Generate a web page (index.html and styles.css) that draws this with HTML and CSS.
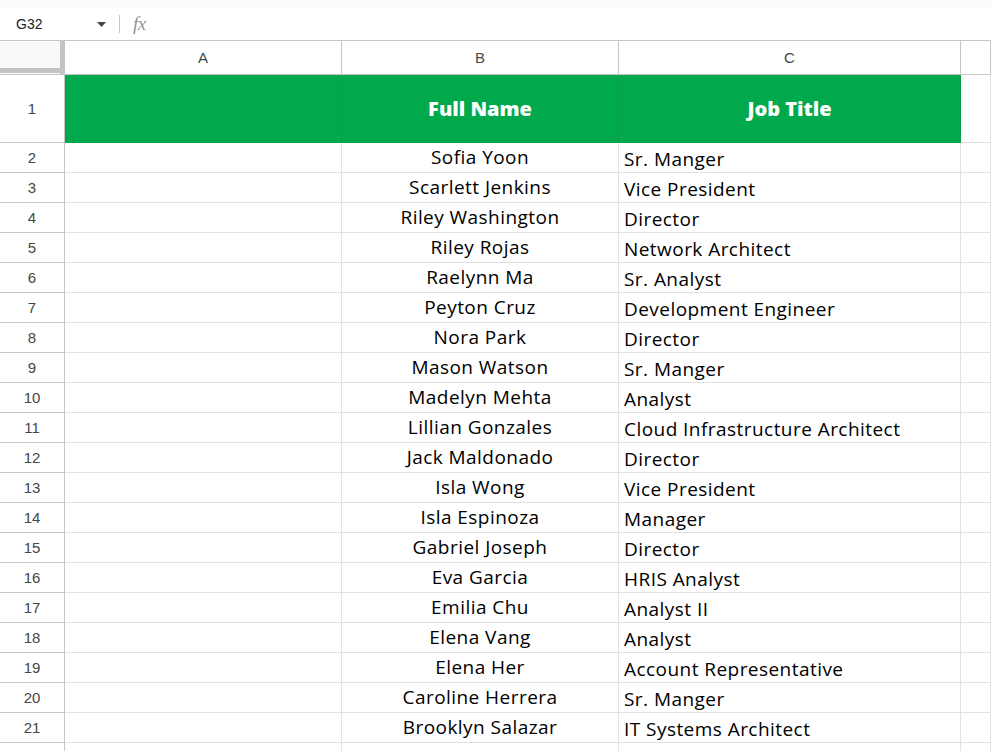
FILE: index.html
```html
<!DOCTYPE html>
<html lang="en">
<head>
    <meta charset="UTF-8">
    <meta name="viewport" content="width=device-width, initial-scale=1.0">
    <title>Employees - Sheet</title>
    <link rel="stylesheet" href="styles.css">
</head>
<body>

    <div class="top-strip"></div>

    <div class="formula-bar">
        <div class="name-box">
            <span class="cell-ref">G32</span>
            <svg class="caret" width="9" height="5" viewBox="0 0 9 5"><path d="M0 0h9L4.5 5z" fill="#444746"/></svg>
        </div>
        <div class="divider"></div>
        <span class="fx">fx</span>
    </div>

    <div class="sheet" id="sheet">
        <div class="corner"><div class="freeze-bar"></div></div>
        <div class="col-head">A</div>
        <div class="col-head">B</div>
        <div class="col-head">C</div>
        <div class="col-head"></div>

        <div class="row-head">1</div>
        <div class="cell title-cell"></div>
        <div class="cell title-cell">Full Name</div>
        <div class="cell title-cell">Job Title</div>
        <div class="cell"></div>
    </div>

    <script>
        const people = [
            ['Sofia Yoon', 'Sr. Manger'],
            ['Scarlett Jenkins', 'Vice President'],
            ['Riley Washington', 'Director'],
            ['Riley Rojas', 'Network Architect'],
            ['Raelynn Ma', 'Sr. Analyst'],
            ['Peyton Cruz', 'Development Engineer'],
            ['Nora Park', 'Director'],
            ['Mason Watson', 'Sr. Manger'],
            ['Madelyn Mehta', 'Analyst'],
            ['Lillian Gonzales', 'Cloud Infrastructure Architect'],
            ['Jack Maldonado', 'Director'],
            ['Isla Wong', 'Vice President'],
            ['Isla Espinoza', 'Manager'],
            ['Gabriel Joseph', 'Director'],
            ['Eva Garcia', 'HRIS Analyst'],
            ['Emilia Chu', 'Analyst II'],
            ['Elena Vang', 'Analyst'],
            ['Elena Her', 'Account Representative'],
            ['Caroline Herrera', 'Sr. Manger'],
            ['Brooklyn Salazar', 'IT Systems Architect']
        ];

        const sheet = document.getElementById('sheet');

        function addRow(label, name, job) {
            const cells = [
                ['row-head', label],
                ['cell', ''],
                ['cell name-cell', name],
                ['cell job-cell', job],
                ['cell', '']
            ];
            cells.forEach(function(c) {
                const div = document.createElement('div');
                div.className = c[0];
                div.textContent = c[1];
                sheet.appendChild(div);
            });
        }

        people.forEach(function(person, i) {
            addRow(String(i + 2), person[0], person[1]);
        });

        // row 22 only peeks in at the bottom edge
        addRow('', '', '');
    </script>

</body>
</html>
```

FILE: styles.css
```css
body {
    margin: 0;
    padding: 0;
    background: #fff;
    font-family: 'Liberation Sans', Arial, sans-serif;
    color: #000;
    overflow: hidden;
}

.top-strip {
    height: 8px;
    background: #f9fbfd;
}

.formula-bar {
    height: 32px;
    display: flex;
    align-items: center;
    background: #fff;
}

.name-box {
    width: 106px;
    display: flex;
    align-items: center;
    justify-content: space-between;
    padding-left: 16px;
    box-sizing: border-box;
}

.cell-ref {
    font-size: 14px;
    color: #202124;
}

.caret {
    margin-top: 1px;
}

.divider {
    width: 1px;
    height: 18px;
    background: #c7c7c7;
    margin-left: 13px;
    margin-right: 13px;
}

.fx {
    font-family: 'Liberation Serif', serif;
    font-style: italic;
    font-size: 19px;
    color: #8f959b;
    letter-spacing: -0.5px;
}

.sheet {
    display: grid;
    grid-template-columns: 65px 277px 277px 342px 30px;
    grid-template-rows: 34px 68px;
    grid-auto-rows: 30px;
    border-top: 1px solid #c4c7c5;
}

.sheet > div {
    box-sizing: border-box;
}

.corner {
    background: #f8f9fa;
    border-right: 5px solid #c4c4c4;
    border-bottom: 1px solid #c4c7c5;
    display: flex;
    flex-direction: column;
    padding-bottom: 1px;
}

.freeze-bar {
    flex: 1;
    border-bottom: 5px solid #c4c4c4;
}

.col-head {
    border-right: 1px solid #c4c7c5;
    border-bottom: 1px solid #c4c7c5;
    font-size: 15px;
    color: #444746;
    display: flex;
    align-items: center;
    justify-content: center;
}

.row-head {
    border-right: 1px solid #c4c7c5;
    border-bottom: 1px solid #c4c7c5;
    font-size: 15px;
    color: #444746;
    display: flex;
    align-items: center;
    justify-content: center;
}

.cell {
    border-right: 1px solid #e1e1e1;
    border-bottom: 1px solid #e1e1e1;
    font-family: 'Open Sans', sans-serif;
    font-size: 19px;
    letter-spacing: 0.45px;
    line-height: 20px;
    white-space: nowrap;
    overflow: hidden;
}

.title-cell {
    background: #00a94b;
    border-right-color: #0c9c46;
    border-bottom-color: #00a94b;
    color: #fff;
    font-weight: 800;
    font-size: 20px;
    letter-spacing: 0;
    display: flex;
    align-items: center;
    justify-content: center;
}

.name-cell {
    text-align: center;
    padding-top: 4px;
}

.job-cell {
    padding-left: 5px;
    padding-top: 6px;
}
```
